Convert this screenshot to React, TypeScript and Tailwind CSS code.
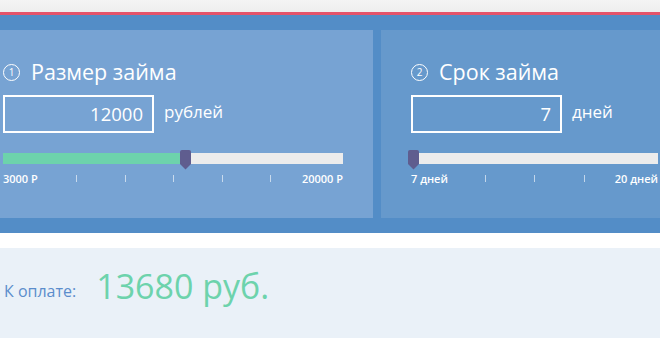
type SliderProps = {
  width: number;
  percent: number;
  min: string;
  max: string;
  ticks: number[];
};

function Slider({ width, percent, min, max, ticks }: SliderProps) {
  const thumbLeft = Math.round((width * percent) / 100);
  return (
    <div style={{ width }}>
      <div className="relative h-[11px] bg-[#ececec]">
        <div className="absolute left-0 top-0 h-full bg-[#6dd3ac]" style={{ width: thumbLeft }} />
        <div className="absolute top-[-3px]" style={{ left: thumbLeft - 3 }}>
          <svg width="11" height="20" viewBox="0 0 11 20">
            <path d="M2 0H9a2 2 0 0 1 2 2V14L5.5 19.5L0 14V2a2 2 0 0 1 2-2Z" fill="#5f5d8f" />
          </svg>
        </div>
      </div>
      <div className="relative mt-[8px] flex items-center justify-between text-[11px] font-semibold leading-[14px] text-white">
        <span>{min}</span>
        {ticks.map((x) => (
          <span key={x} className="absolute top-[3px] h-[7px] w-px bg-white/60" style={{ left: x }} />
        ))}
        <span>{max}</span>
      </div>
    </div>
  );
}

type PanelProps = {
  num: string;
  title: string;
  value: string;
  unit: string;
  className: string;
  children: React.ReactNode;
};

function Panel({ num, title, value, unit, className, children }: PanelProps) {
  return (
    <div className={className}>
      <div className="mt-[27px] flex items-center gap-[11px]">
        <span className="flex h-[17px] w-[17px] items-center justify-center rounded-full border border-white text-[10px] leading-none text-white">
          {num}
        </span>
        <h2 className="text-[21.5px] leading-[30px] text-white">{title}</h2>
      </div>
      <div className="mt-[8px] flex items-center gap-[10px]">
        <div className="flex h-[38px] w-[151px] items-center justify-end border-2 border-white pr-[9px] text-[18.5px] text-white">
          {value}
        </div>
        <span className="-mt-[4px] text-[17px] text-white">{unit}</span>
      </div>
      <div className="mt-[20px]">{children}</div>
    </div>
  );
}

export default function App() {
  return (
    <div className="h-[349px] w-[660px] overflow-hidden bg-white font-['Open_Sans',sans-serif]">
      <div className="h-[12px] bg-gradient-to-b from-[#f4f4f4] to-[#eeeeee]" />
      <div className="h-[3px] bg-[#e5546b]" />
      <div className="flex gap-[8px] bg-[#538dc7] pb-[15px] pt-[15px]">
        <Panel
          num="1"
          title="Размер займа"
          value="12000"
          unit="рублей"
          className="h-[188px] w-[373px] shrink-0 bg-[#77a3d3] pl-[3px]"
        >
          <Slider width={340} percent={53} min="3000 Р" max="20000 Р" ticks={[73, 122, 170, 219, 267]} />
        </Panel>
        <Panel
          num="2"
          title="Срок займа"
          value="7"
          unit="дней"
          className="h-[188px] flex-1 bg-[#6699cc] pl-[30px]"
        >
          <Slider width={247} percent={0} min="7 дней" max="20 дней" ticks={[74, 123, 173]} />
        </Panel>
      </div>
      <div className="mt-[15px] flex h-[90px] items-center gap-[20px] bg-[#eaf1f8] pb-[5px] pl-[4px]">
        <span className="text-[16px] text-[#5b8dcc]">К оплате:</span>
        <span className="-mt-[8px] text-[34px] text-[#6dd3ac]">13680 руб.</span>
      </div>
    </div>
  );
}
